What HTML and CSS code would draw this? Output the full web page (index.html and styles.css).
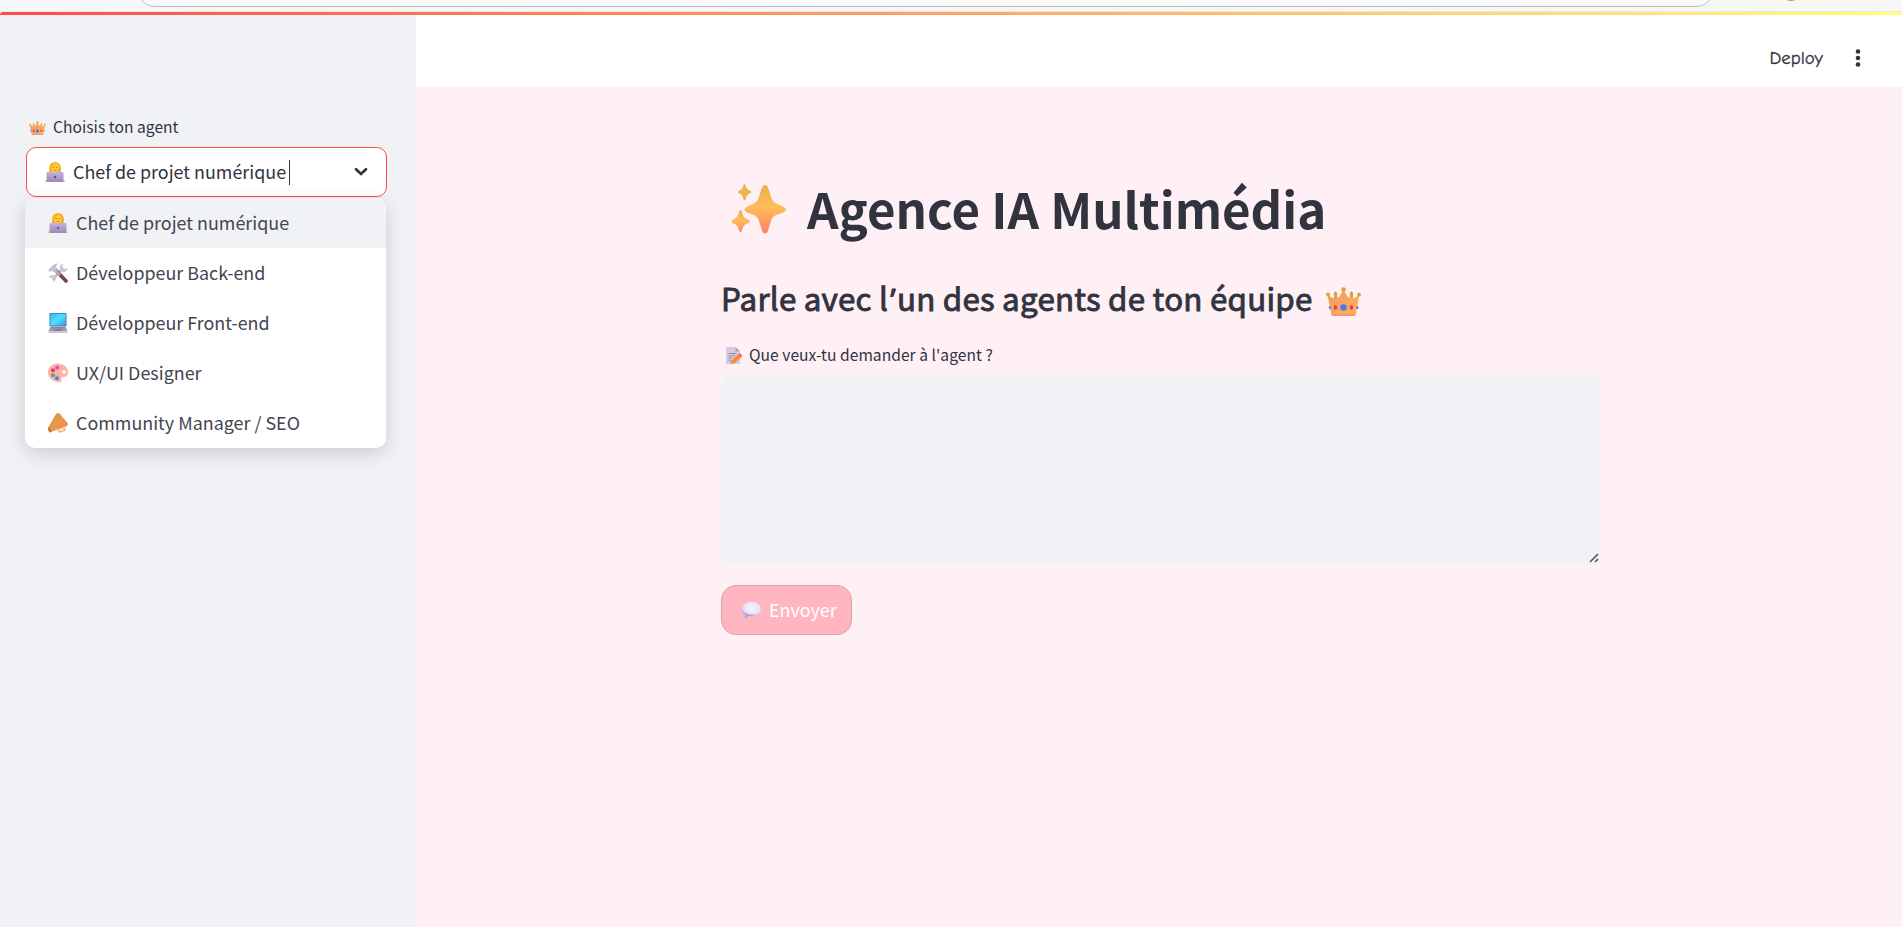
FILE: index.html
```html
<!DOCTYPE html>
<html lang="fr">
<head>
<meta charset="utf-8">
<title>Agence IA Multimédia</title>
<link rel="stylesheet" href="styles.css">
</head>
<body>
<svg class="defs" width="0" height="0" aria-hidden="true">
  <defs>
    <linearGradient id="gold" x1="0" y1="0" x2="0" y2="1"><stop offset="0" stop-color="#e9b04c"/><stop offset=".45" stop-color="#ffbd58"/><stop offset="1" stop-color="#ff806a"/></linearGradient>
    <linearGradient id="crownFill" x1="0" y1="0" x2="1" y2="1"><stop offset="0" stop-color="#ee9a5c"/><stop offset=".5" stop-color="#f6a55e"/><stop offset="1" stop-color="#ffb85c"/></linearGradient>
    <linearGradient id="lilac" x1="0" y1="0" x2="0" y2="1"><stop offset="0" stop-color="#c5b2dd"/><stop offset="1" stop-color="#9d86bb"/></linearGradient>
    <linearGradient id="screen" x1="0" y1="0" x2="1" y2="1"><stop offset="0" stop-color="#2fc3f2"/><stop offset=".5" stop-color="#4ee0ff"/><stop offset="1" stop-color="#2a9df0"/></linearGradient>
    <linearGradient id="horn" x1="0" y1="0" x2="1" y2=".6"><stop offset="0" stop-color="#c98d3a"/><stop offset=".5" stop-color="#e79a4b"/><stop offset="1" stop-color="#f58a55"/></linearGradient>
    <radialGradient id="bubble" cx=".55" cy=".4" r=".6"><stop offset="0" stop-color="#f8f3fa"/><stop offset=".65" stop-color="#ebe2f5"/><stop offset="1" stop-color="#c3aede"/></radialGradient>
    <symbol id="crown" viewBox="0 0 35 29">
      <path d="M1.500 8L7.500 11.500L9.500 7L12.500 11L17.500 3L22.500 11L25.500 7L27.500 11.500L33.500 8L30 26Q29.500 29 27 29H8Q5.500 29 5 26Z" fill="url(#crownFill)"/>
      <path d="M5 26.500Q18 28.500 30 26.500Q29.500 29 27 29H8Q5.500 29 5 26.500Z" fill="#ff8f70"/>
      <g fill="#d9a238"><circle cx="17.500" cy="2.500" r="2.300"/><circle cx="2" cy="7.500" r="1.900"/><circle cx="33" cy="7.500" r="1.900"/><ellipse cx="9.500" cy="7.500" rx="1.700" ry="3"/><ellipse cx="25.500" cy="7.500" rx="1.700" ry="3"/></g>
      <circle cx="17.500" cy="20.500" r="3.200" fill="#4a78f0"/>
      <g fill="#ee2f62"><ellipse cx="9.500" cy="20.500" rx="1.700" ry="2.200"/><ellipse cx="25.500" cy="20.500" rx="1.700" ry="2.200"/></g>
      <g fill="#4a6fd8"><ellipse cx="3.800" cy="20.500" rx=".9" ry="1.600"/><ellipse cx="31.500" cy="20.500" rx=".9" ry="1.600"/></g>
    </symbol>
    <symbol id="worker" viewBox="0 0 20 20">
      <path d="M4.300 11Q3 0 10 0Q17 0 15.700 11Z" fill="#f4a81c"/>
      <ellipse cx="10" cy="6" rx="4" ry="4.500" fill="#ffca3e"/>
      <path d="M5 6Q5 1 11 1.500Q9 4 5 6Z" fill="#ffb91f"/>
      <path d="M7.500 5.500h1.500M11 5.500h1.500" stroke="#a87f3b" stroke-width=".9"/>
      <path d="M8.500 8.200Q10 9.200 11.500 8.200" stroke="#d4772b" stroke-width=".8" fill="none"/>
      <path d="M0 20Q0 17 3 17.500H17Q20 17 20 20Z" fill="#ffc63d"/>
      <rect x="1.500" y="10" width="17" height="10" rx="1" fill="url(#lilac)"/>
      <circle cx="10" cy="15" r="1.200" fill="#69547f"/>
    </symbol>
    <symbol id="tools" viewBox="0 0 20 20">
      <path d="M4.500 16.500L15.500 5" stroke="#c9c1d2" stroke-width="2.800"/>
      <path d="M15.500 1A4 4 0 1 0 19.500 5L16.500 6L14.500 4Z" fill="#cfc7d8"/>
      <path d="M1 15A3.500 3.500 0 1 1 5 19L6 16.500L4.500 14.500Z" fill="#cfc7d8"/>
      <path d="M8 7.500L18 18" stroke="#744450" stroke-width="3.600" stroke-linecap="round"/>
      <path d="M6 6L12 12" stroke="#b7abc2" stroke-width="2.800"/>
      <path d="M0 7L5 2Q7.500 0 10 .5L8 3.500L9.500 6L6 9.500L4 7.500L2 9Z" fill="#c8bfd3"/>
    </symbol>
    <symbol id="laptop" viewBox="0 0 20 21">
      <rect x="1" y="0" width="18" height="14" rx=".8" fill="#5a78b8"/>
      <rect x="2" y="1" width="16" height="12" fill="url(#screen)"/>
      <path d="M2 14H18L20 19H0Z" fill="#aaa4b9"/>
      <path d="M3 15.200H17M2.500 16.800H17.500" stroke="#817a95" stroke-width=".8"/>
      <rect x="6" y="17" width="8" height="1.800" fill="#817b91"/>
      <rect y="19" width="20" height="2" rx=".6" fill="#cbc3da"/>
    </symbol>
    <symbol id="palette" viewBox="0 0 20 19">
      <path d="M9.500 0C16 0 20 4 20 9C20 13 17 13.500 14.500 13.500C12.500 14 13.500 16 13.500 17C13 19 11 19 9.500 18.500C4 17.500 0 14 0 9C0 4 4 0 9.500 0Z" fill="#ffb09f"/>
      <circle cx="16" cy="8.500" r="2" fill="#fff"/>
      <circle cx="9.200" cy="4" r="2" fill="#c552e8"/><circle cx="5" cy="6.800" r="2" fill="#e92f83"/><circle cx="5" cy="11.700" r="2" fill="#31b2a4"/><circle cx="9" cy="14.700" r="2" fill="#3d86ef"/>
    </symbol>
    <symbol id="megaphone" viewBox="0 0 20 20">
      <path d="M10 17L17 14.500Q19 18 14 19L11 20Z" fill="#f6ad4a"/><path d="M12 17.500L15.500 16.200" stroke="#fff" stroke-width="1.500"/>
      <path d="M8 1Q10-1 12 1L19.500 10Q20.500 12.500 18 13.500L4 18.500Q0 18 .5 14Z" fill="url(#horn)"/>
      <path d="M.5 14L4 18.500Q2 20.500.8 18.500Q-.5 16.500.5 14Z" fill="#b97b35"/>
    </symbol>
    <symbol id="memo" viewBox="0 0 16 17">
      <path d="M0 0H9.500L14 4.500V17H0Z" fill="#d7cbe2"/><path d="M9.500 0V4.500H14Z" fill="#afa0bd"/>
      <path d="M2.500 6.500H10.500M2.500 8.800H9M2.500 11H6.500M2.500 13.200H5" stroke="#8f819d" stroke-width=".9"/>
      <path d="M5 14L12.500 7L15.500 10L8 16.500H4.300Z" fill="#f9873b"/><path d="M12.500 7Q14 6 15.300 7.500Q16.500 9 15.500 10Z" fill="#f24468"/>
    </symbol>
    <symbol id="speech" viewBox="0 0 20 16">
      <path d="M10 0C16 0 20 3 20 7C20 11 16 14 10 14Q8.500 14 7.500 13.700Q6 16 3.500 16Q4.500 14 4 12.300Q0 10 0 7C0 3 4 0 10 0Z" fill="url(#bubble)"/>
      <path d="M.5 9Q2 12 4 12.300Q4.500 14 3.500 16Q6 16 7.500 13.700Q12 14.500 16 12.500Q8 13.500 .5 9Z" fill="#b7a0d8"/>
    </symbol>
    <symbol id="sparkles" viewBox="0 0 55 50">
      <g fill="url(#gold)">
        <path d="M34 1Q36.500 1 37.500 5L40 13Q41.500 18 46 20L52 22.500Q55 24 55 25.500Q55 27 52 28.500L45 31Q41 33 40 37L37.500 45Q36.500 49.500 34 49.500Q31.500 49.500 30.500 45L28 37Q27 33 23 31L16 28.500Q13.500 27 13.500 25.500Q13.500 24 16 22.500L22 20Q26.500 18 28 13L30.500 5Q31.500 1 34 1Z"/>
        <path d="M9.500 26Q10.800 26 11.500 30Q12.300 33.500 15 34.500Q19 36 19 37.500Q19 38.500 15 40Q12.500 41 11.500 44.500Q10.500 48.500 9.500 48.500Q8.500 48.500 7.500 44.500Q6.500 41 4 40Q.5 38.500.5 37.500Q.5 36 4 34.500Q6.800 33.500 7.500 30Q8.200 26 9.500 26Z"/>
      </g>
      <path d="M13.500 0Q14.500 0 15.200 3Q15.800 5.500 18 6.300Q20.500 7 20.500 8Q20.500 9 18 9.800Q16 10.500 15.200 13.500Q14.500 16.500 13.500 16.500Q12.500 16.500 11.800 13.500Q11 10.500 9 9.800Q7 9 7 8Q7 7 9 6.300Q11.200 5.500 11.800 3Q12.500 0 13.500 0Z" fill="#edb451"/>
    </symbol>
  </defs>
</svg>

<div class="page">
  <div class="browser-edge">
    <div class="address-bar"></div>
    <div class="profile"></div>
  </div>
  <div class="rainbow"></div>
  <div class="app">
    <aside class="sidebar">
      <div class="field-label agent-label"><svg class="crown-small"><use href="#crown"/></svg><span class="text">Choisis ton agent</span></div>
      <div class="select">
        <svg class="emoji"><use href="#worker"/></svg>
        <span class="text select-value">Chef de projet numérique</span><span class="caret"></span>
        <svg class="chevron" viewBox="0 0 14 10"><path d="M2 2.200L7 7L12 2.200" fill="none" stroke="#31333f" stroke-width="2.700" stroke-linecap="round"/></svg>
        <ul class="menu">
          <li class="option selected"><svg class="emoji"><use href="#worker"/></svg><span class="text">Chef de projet numérique</span></li>
          <li class="option"><svg class="emoji"><use href="#tools"/></svg><span class="text">Développeur Back-end</span></li>
          <li class="option"><svg class="emoji"><use href="#laptop"/></svg><span class="text">Développeur Front-end</span></li>
          <li class="option"><svg class="emoji"><use href="#palette"/></svg><span class="text">UX/UI Designer</span></li>
          <li class="option"><svg class="emoji"><use href="#megaphone"/></svg><span class="text">Community Manager / SEO</span></li>
        </ul>
      </div>
    </aside>
    <main class="main">
      <header class="toolbar">
        <span class="deploy">Deploy</span>
        <svg class="dots" viewBox="0 0 6 18"><g fill="#31333f"><circle cx="3" cy="2.500" r="2.300"/><circle cx="3" cy="9" r="2.300"/><circle cx="3" cy="15.500" r="2.300"/></g></svg>
      </header>
      <section class="content">
        <h1 class="title"><svg class="sparkles"><use href="#sparkles"/></svg><span class="text">Agence IA Multimédia</span></h1>
        <h2 class="subtitle"><span class="text">Parle avec l<span class="apostrophe">’</span>un des agents de ton équipe</span><svg class="crown-large"><use href="#crown"/></svg></h2>
        <div class="field-label question-label"><svg class="memo"><use href="#memo"/></svg><span class="text">Que veux-tu demander à l'agent ?</span></div>
        <div class="textarea"><svg class="grip" viewBox="0 0 10 10"><path d="M1 9L9 1M6 9L9 6" stroke="#54565d" stroke-width="1.700"/></svg></div>
        <div class="send"><svg class="speech"><use href="#speech"/></svg><span class="text">Envoyer</span></div>
      </section>
    </main>
  </div>
</div>
</body>
</html>
```
FILE: styles.css
```css
* { box-sizing: border-box; }
body {
  margin: 0;
  font-family: "Source Sans Pro", "Noto Sans CJK SC", "Open Sans", sans-serif;
  color: #31333f;
  white-space: nowrap;
}
.defs { position: absolute; }
svg { display: block; flex: none; }
.text { padding-bottom: 2px; }
.page { display: flex; flex-direction: column; height: 927px; overflow: hidden; background: #f7f7f7; }
.browser-edge { flex: none; display: flex; height: 12px; padding-left: 137px; overflow: hidden; border-bottom: 1px solid #e9e9ea; }
.address-bar { width: 1577px; height: 36px; margin-top: -29px; border: 1px solid #bebebe; border-radius: 18px; background: #fbfbfb; }
.profile { width: 18px; height: 18px; margin: -17px 0 0 68px; border: 2px solid #999; border-radius: 50%; }
.rainbow { flex: none; height: 3px; border-radius: 6px 6px 0 0; background: linear-gradient(90deg, #ff4b4b, #fffd80); }
.app { flex: 1; display: flex; min-height: 0; }

.sidebar { width: 416px; background: #f0f2f6; padding: 97px 29px 0 26px; }
.field-label { display: flex; align-items: center; height: 30px; font-size: 15.600px; line-height: 28px; letter-spacing: .03px; }
.agent-label { padding-left: 3px; gap: 7px; margin-bottom: 5px; }
.crown-small { width: 17px; height: 14px; margin-top: 2px; }
.select { position: relative; display: flex; align-items: center; height: 50px; padding: 0 18px; border: 1px solid #ff4b4b; border-radius: 10px; background: #fff; font-size: 17.900px; }
.emoji { width: 20px; height: 20px; }
.select-value { margin-left: 8px; }
.caret { width: 1px; height: 25px; margin-left: 3px; background: #31333f; }
.chevron { width: 14px; height: 10px; margin-left: auto; }
.menu { position: absolute; top: 50px; left: -2px; z-index: 2; width: 361px; margin: 0; padding: 0; list-style: none; overflow: hidden; border-radius: 10px; background: #fff; box-shadow: 0 5px 20px rgba(0, 0, 0, .16); }
.option { display: flex; align-items: center; gap: 8px; height: 50px; padding-left: 23px; color: #434550; }
.selected { background: #f0f2f6; }

.main { flex: 1; background: #fff0f5; }
.toolbar { display: flex; align-items: center; justify-content: flex-end; gap: 32px; height: 72px; padding: 13px 41px 0 0; background: #fff; }
.deploy { font-family: "Comic Sans MS", "Comic Neue", Lato, sans-serif; font-size: 18.800px; -webkit-text-stroke: .3px #31333f; }
.dots { width: 6px; height: 18px; }
.content { width: 880px; margin-left: 305px; padding-top: 82px; }
.title { display: flex; align-items: center; gap: 21px; height: 80px; margin: 0; padding-left: 10px; font-size: 49.200px; font-weight: 700; line-height: 78px; }
.sparkles { width: 55px; height: 50px; }
.subtitle { display: flex; align-items: center; gap: 14px; height: 60px; margin: 20px 0 0; font-size: 31.300px; font-weight: 400; line-height: 58px; letter-spacing: .24px; -webkit-text-stroke: .9px #31333f; }
.subtitle svg { -webkit-text-stroke: 0; }
.apostrophe { padding: 0 1px 0 2px; font-family: "Noto Sans", sans-serif; }
.crown-large { width: 35px; height: 29px; margin-top: 4px; }
.question-label { gap: 7px; margin-top: 11px; padding-left: 5px; }
.memo { width: 16px; height: 17px; }
.textarea { display: flex; align-items: flex-end; justify-content: flex-end; height: 190px; margin-top: 5px; padding: 0 2px 2px; border-radius: 10px; background: #f0f2f6; }
.grip { width: 10px; height: 10px; }
.send { display: flex; align-items: center; gap: 8px; width: 131px; height: 50px; margin-top: 20px; padding-left: 19px; border: 1px solid #d9a0ad; border-radius: 15px; background: #ffb6c1; color: #fff; font-size: 17.900px; }
.speech { width: 20px; height: 16px; }
```
